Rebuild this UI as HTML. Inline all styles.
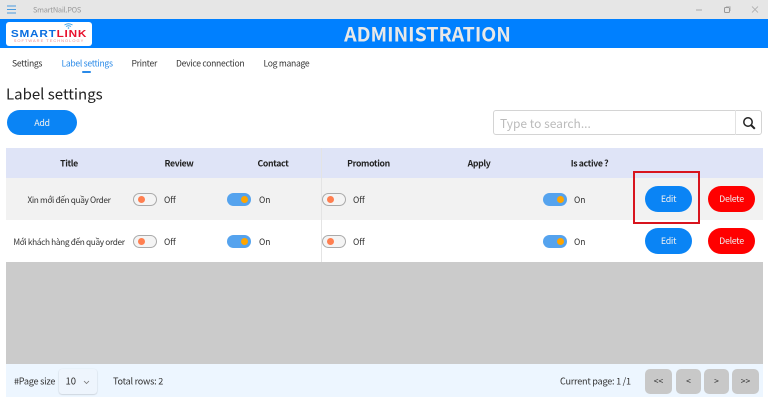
<!DOCTYPE html>
<html><head><meta charset="utf-8">
<style>
*{box-sizing:border-box}
html,body{margin:0;padding:0;width:768px;height:402px;overflow:hidden;background:#fff;font-family:"Noto Sans CJK SC","Liberation Sans",sans-serif;color:#333}
.a{position:absolute}
.t{position:absolute;white-space:nowrap;line-height:1;transform:translate(-50%,-50%)}
.l{position:absolute;white-space:nowrap;line-height:1;transform:translateY(-50%)}
.tab{font-size:8.600px;letter-spacing:-.3px;color:#333}
.th{font-size:8.700px;letter-spacing:-.35px;font-weight:600;color:#222}
.td{font-size:8.500px;color:#333}
.ti{font-size:8.300px;letter-spacing:-.35px}
.f{font-size:9.100px;letter-spacing:-.24px}
.sw{position:absolute;width:24px;height:13px;border-radius:7px}
.sw.off{background:#f4f4f4;border:1px solid #aaa}
.sw.off i{position:absolute;left:4px;top:2px;width:7px;height:7px;border-radius:50%;background:#ff7f50}
.sw.on{background:#55a3ee}
.sw.on i{position:absolute;left:14px;top:3px;width:7px;height:7px;border-radius:50%;background:#ffa500}
.btn{position:absolute;border-radius:13px;color:#f0f0f0;font-size:8.900px;letter-spacing:-.3px;display:flex;align-items:center;justify-content:center}
.pg{position:absolute;top:368.500px;height:25px;background:#c8c8c8;border-radius:5px;font-size:8.500px;color:#333;display:flex;align-items:center;justify-content:center}
</style></head><body>
<div class="a" style="left:0;top:0;width:768px;height:19px;background:#e6e6e6"></div>
<svg class="a" style="left:7px;top:5px" width="11" height="9" viewBox="0 0 11 9"><path d="M0 1h9M0 4.500h9M0 8h9" stroke="#4a9ade" stroke-width="1" fill="none"/></svg>
<div class="l" style="left:33px;top:10px;font-size:7.400px;letter-spacing:-.25px;color:#999">SmartNail.POS</div>
<svg class="a" style="left:690px;top:4px" width="78" height="12" viewBox="0 0 78 12"><path d="M6 6h6" stroke="#aaa" stroke-width="1"/><rect x="34.500" y="3.500" width="5" height="5" rx="1" fill="none" stroke="#999"/><path d="M36 2.500h4l.5.5v4" stroke="#bbb" fill="none" stroke-width=".7"/><path d="M62 2.500l6 6M68 2.500l-6 6" stroke="#aaa" stroke-width=".8"/></svg>

<div class="a" style="left:0;top:19px;width:768px;height:29px;background:#0080ff"></div>
<div class="t" style="left:427.500px;top:32.500px;font-size:19.500px;font-weight:700;color:#e8e8e8">ADMINISTRATION</div>
<div class="a" style="left:6px;top:22px;width:86px;height:23.500px;background:#fff;border-radius:3px"></div>
<div class="t" style="left:49px;top:33.500px;font:900 10.500px/1 'Liberation Sans',sans-serif;letter-spacing:.7px;color:#0a6ee0;transform:translate(-50%,-50%) scaleX(1.12)">SMART<span style="color:#e8112d">LINK</span></div>
<div class="t" style="left:49px;top:41px;font:400 4px/1 'Liberation Sans',sans-serif;letter-spacing:1px;color:#e88">SOFTWARE TECHNOLOGY</div>
<svg class="a" style="left:64px;top:23px" width="9" height="6" viewBox="0 0 9 6"><path d="M.5 2Q4.500-.5 8.500 2M2 3.500Q4.500 2 7 3.500" stroke="#3aa0e8" fill="none" stroke-width="1"/><circle cx="4.500" cy="5" r=".8" fill="#3aa0e8"/></svg>

<div class="l tab" style="left:12px;top:64px">Settings</div>
<div class="l tab" style="left:61.500px;top:64px;color:#2a8ae8">Label settings</div>
<div class="a" style="left:82px;top:71px;width:9px;height:1.500px;background:#2a8ae8;border-radius:1px"></div>
<div class="l tab" style="left:131.500px;top:64px">Printer</div>
<div class="l tab" style="left:176px;top:64px">Device connection</div>
<div class="l tab" style="left:263.500px;top:64px">Log manage</div>

<div class="l" style="left:6px;top:94px;font-size:15px;color:#222">Label settings</div>
<div class="btn" style="left:7px;top:110px;width:70px;height:25px;background:#0a84f5">Add</div>

<div class="a" style="left:493px;top:110px;width:269px;height:25px;border:1px solid #d4d4d4;border-radius:3px;background:#fff"></div>
<div class="a" style="left:735px;top:110px;width:1px;height:25px;background:#e2e2e2"></div>
<div class="l" style="left:500px;top:124px;font-size:12px;color:#bbb">Type to search...</div>
<svg class="a" style="left:742px;top:116px" width="14" height="14" viewBox="0 0 14 14"><circle cx="6" cy="6" r="4.200" fill="none" stroke="#222" stroke-width="1.500"/><path d="M9 9l3.800 3.800" stroke="#222" stroke-width="2"/></svg>

<div class="a" style="left:6px;top:148px;width:757px;height:30px;background:#dfe4f7"></div>
<div class="a" style="left:6px;top:178px;width:757px;height:42px;background:#f2f2f2"></div>
<div class="a" style="left:6px;top:220px;width:757px;height:42px;background:#fff"></div>
<div class="a" style="left:6px;top:262px;width:757px;height:102px;background:#cbcbcb"></div>
<div class="a" style="left:321px;top:148px;width:1px;height:114px;background:#e4e4e4"></div>

<div class="t th" style="left:69px;top:164px">Title</div>
<div class="t th" style="left:179px;top:164px">Review</div>
<div class="t th" style="left:273px;top:164px">Contact</div>
<div class="t th" style="left:368.500px;top:164px">Promotion</div>
<div class="t th" style="left:479px;top:164px">Apply</div>
<div class="t th" style="left:589.500px;top:164px">Is active ?</div>

<div class="t td ti" style="left:69px;top:200px">Xin mới đến quầy Order</div>
<div class="t td ti" style="left:69px;top:242px">Mới khách hàng đến quầy order</div>

<div class="sw off" style="left:133px;top:192.500px"><i></i></div><div class="l td" style="left:164px;top:199.500px">Off</div>
<div class="sw on" style="left:227px;top:192.500px"><i></i></div><div class="l td" style="left:259px;top:199.500px">On</div>
<div class="sw off" style="left:322px;top:192.500px"><i></i></div><div class="l td" style="left:353px;top:199.500px">Off</div>
<div class="sw on" style="left:543px;top:192.500px"><i></i></div><div class="l td" style="left:574px;top:199.500px">On</div>

<div class="sw off" style="left:133px;top:234.500px"><i></i></div><div class="l td" style="left:164px;top:241.500px">Off</div>
<div class="sw on" style="left:227px;top:234.500px"><i></i></div><div class="l td" style="left:259px;top:241.500px">On</div>
<div class="sw off" style="left:322px;top:234.500px"><i></i></div><div class="l td" style="left:353px;top:241.500px">Off</div>
<div class="sw on" style="left:543px;top:234.500px"><i></i></div><div class="l td" style="left:574px;top:241.500px">On</div>

<div class="btn" style="left:645px;top:186px;width:47px;height:25.500px;background:#0a84f5">Edit</div>
<div class="btn" style="left:708px;top:186px;width:47px;height:25.500px;background:#ff0000">Delete</div>
<div class="btn" style="left:645px;top:228px;width:47px;height:25.500px;background:#0a84f5">Edit</div>
<div class="btn" style="left:708px;top:228px;width:47px;height:25.500px;background:#ff0000">Delete</div>
<div class="a" style="left:633px;top:171px;width:67px;height:53px;border:2px solid #d8141e"></div>

<div class="a" style="left:6px;top:364px;width:757px;height:33px;background:#edf6ff"></div>
<div class="l td f" style="left:14px;top:381px">#Page size</div>
<div class="a" style="left:59px;top:369px;width:38px;height:25px;background:#eef5fd;border-radius:3px;box-shadow:0 .5px 1.500px rgba(0,0,0,.22)"></div>
<div class="l td" style="left:65.500px;top:381px;font-size:9.500px">10</div>
<svg class="a" style="left:83px;top:379.500px" width="7" height="5" viewBox="0 0 7 5"><path d="M1 1l2.500 2.500L6 1" stroke="#777" stroke-width=".8" fill="none"/></svg>
<div class="l td f" style="left:113px;top:381px">Total rows: 2</div>
<div class="l td f" style="left:560px;top:381px">Current page: 1 /1</div>
<div class="pg" style="left:645px;width:27px">&lt;&lt;</div>
<div class="pg" style="left:676px;width:25px">&lt;</div>
<div class="pg" style="left:704px;width:25px">&gt;</div>
<div class="pg" style="left:732px;width:27px">&gt;&gt;</div>
</body></html>
